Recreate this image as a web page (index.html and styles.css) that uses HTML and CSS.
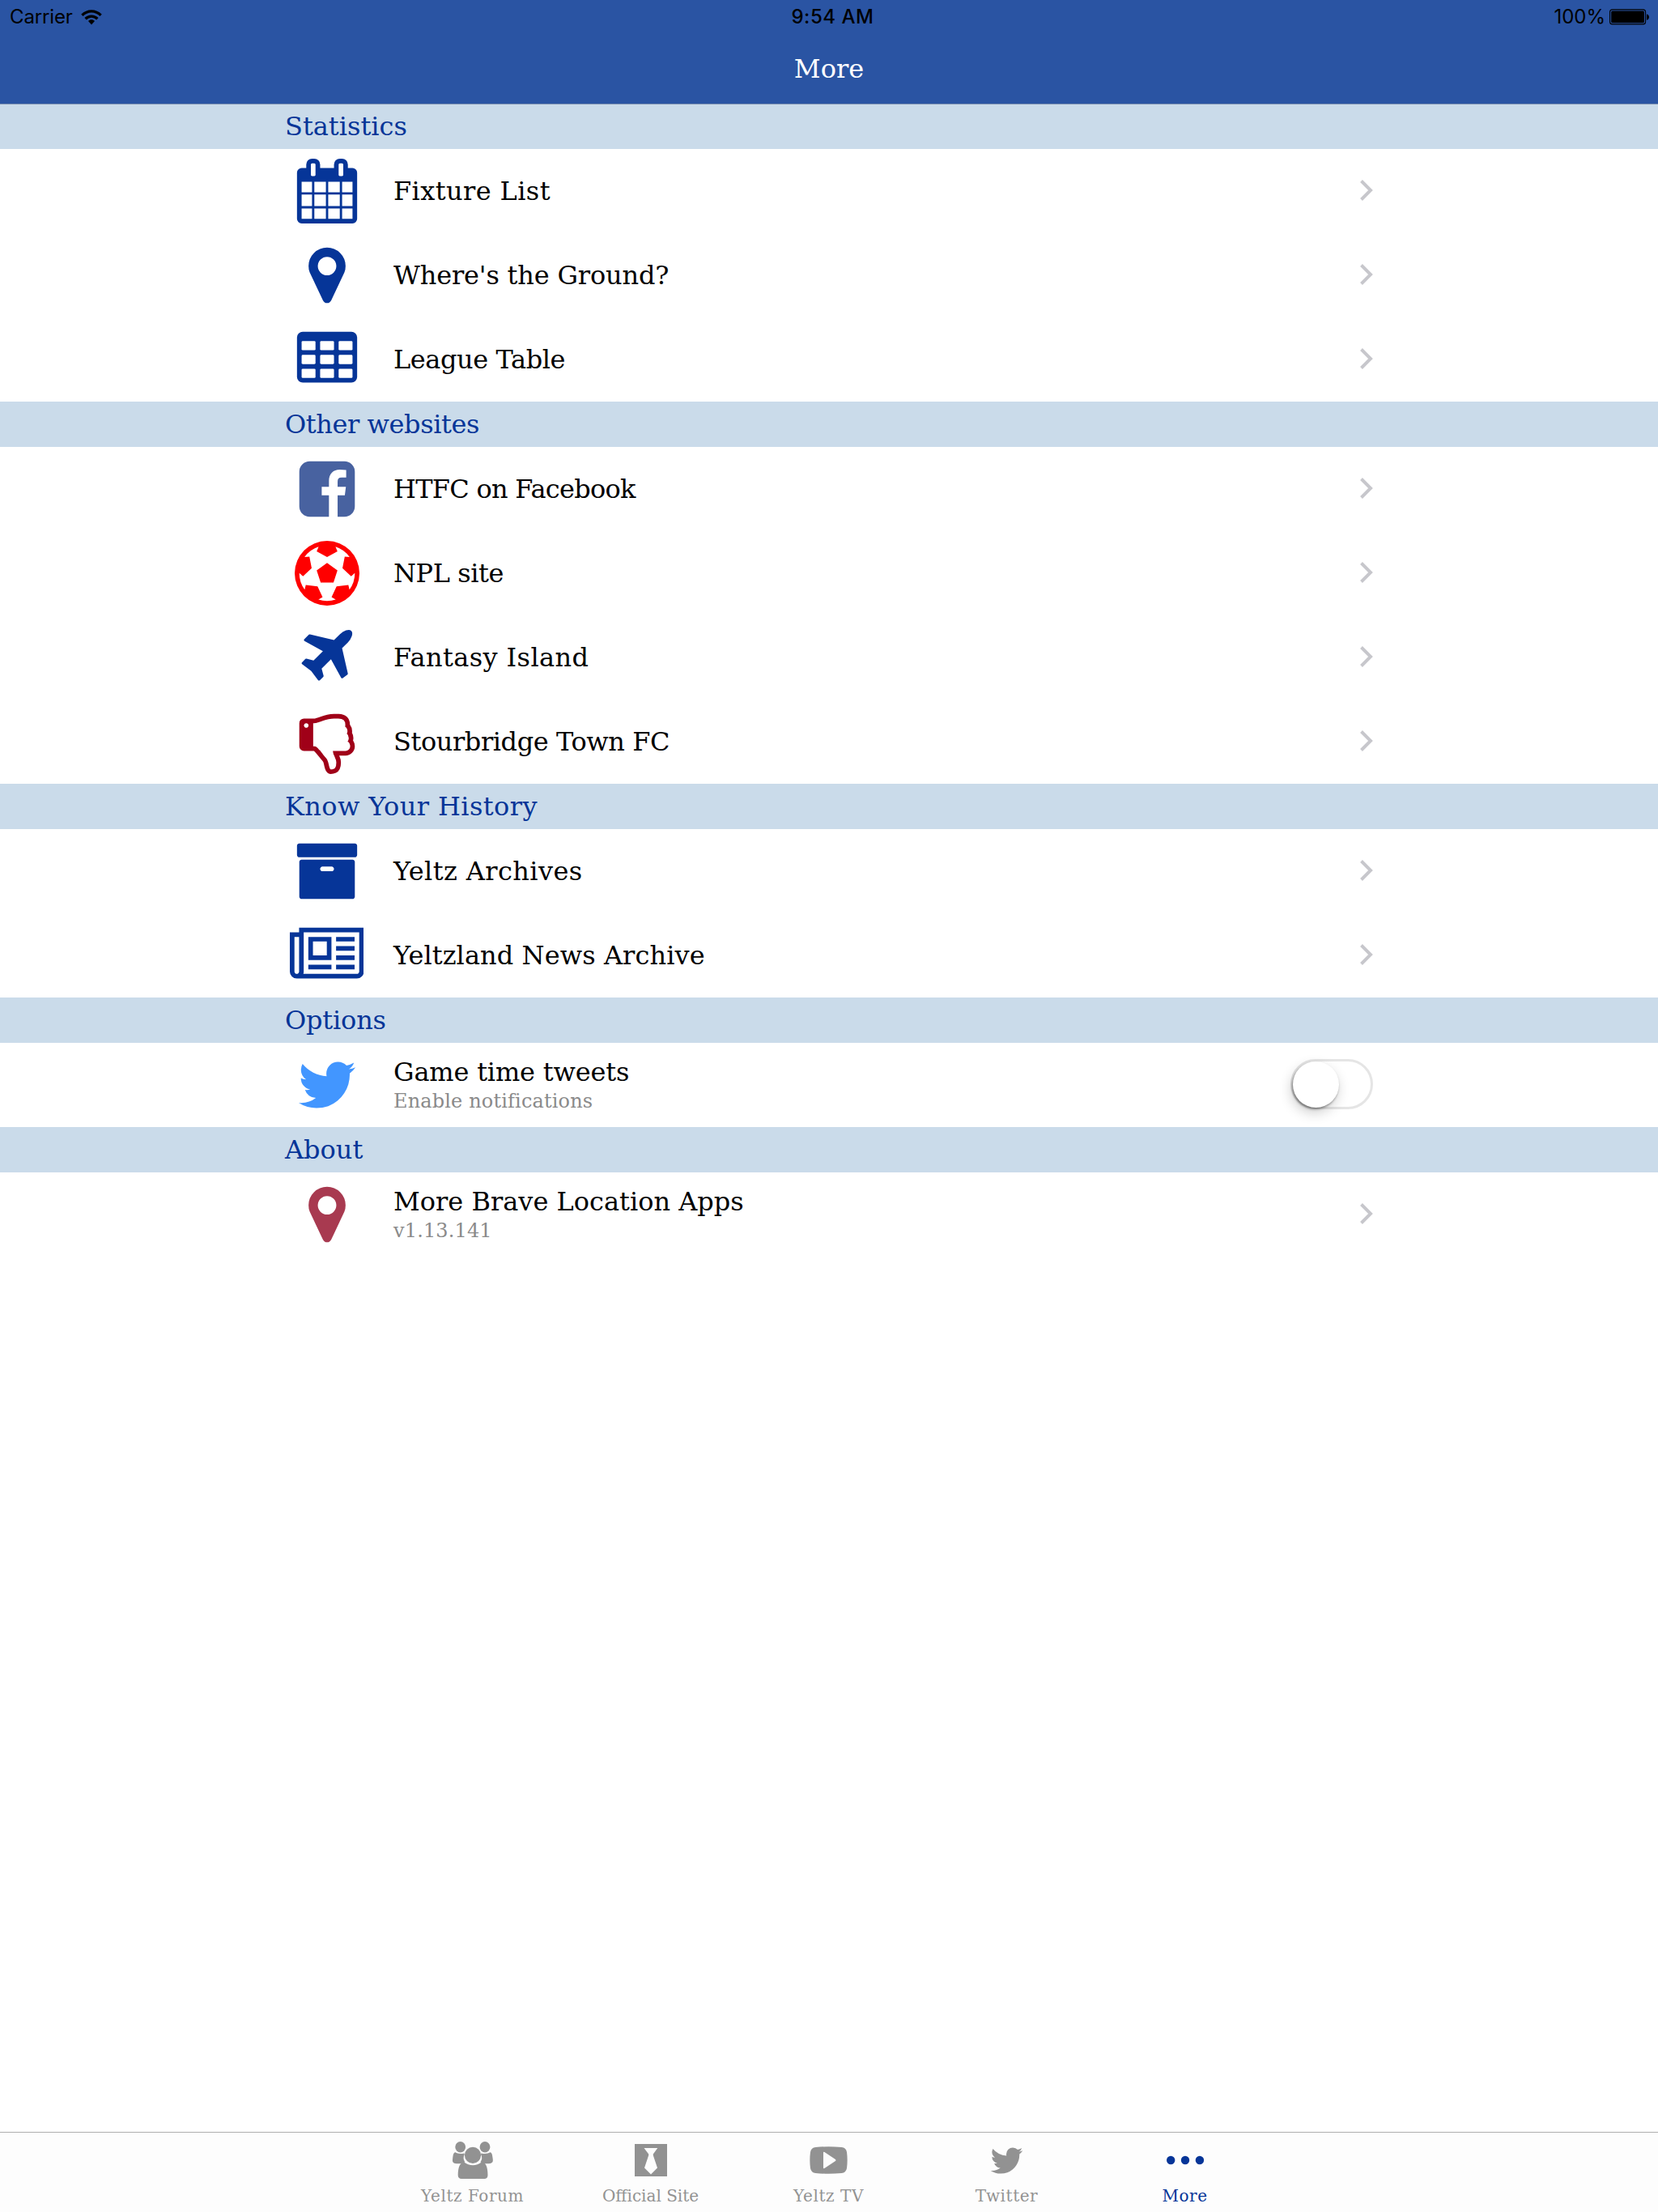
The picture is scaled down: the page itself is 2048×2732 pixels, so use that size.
FILE: index.html
```html
<!DOCTYPE html>
<html lang="en">
<head>
<meta charset="utf-8">
<title>More</title>
<link rel="stylesheet" href="styles.css">
</head>
<body>
<svg class="sprite" aria-hidden="true">
  <symbol id="pin" viewBox="0 0 1792 1792"><path d="M1152 640q0-106-75-181t-181-75-181 75-75 181 75 181 181 75 181-75 75-181zm256 0q0 109-33 179l-364 774q-16 33-47.500 52t-67.500 19-67.500-19-46.500-52l-365-774q-33-70-33-179 0-212 150-362t362-150 362 150 150 362z"/></symbol>
  <symbol id="bird" viewBox="0 0 1792 1792"><path d="M1684 408q-67 98-162 167 1 14 1 42 0 130-38 259.500t-115.500 248.500-184.500 210.500-258 146-323 54.500q-271 0-496-145 35 4 78 4 225 0 401-138-105-2-188-64.500t-114-159.500q33 5 61 5 43 0 85-11-112-23-185.500-111.500t-73.500-205.500v-4q68 38 146 41-66-44-105-115t-39-154q0-88 44-163 121 149 294.500 238.500t371.500 99.500q-8-38-8-74 0-134 94.500-228.500t228.500-94.500q140 0 236 102 109-21 205-78-37 115-142 178 93-10 186-50z"/></symbol>
  <symbol id="chevron" viewBox="0 0 18 28"><path d="M2.500 2.500L14 14 2.500 25.500" fill="none" stroke="currentColor" stroke-width="4"/></symbol>
</svg>

<header class="topbar">
  <div class="status">
    <div class="status-left">
      <span>Carrier</span>
      <svg class="wifi" viewBox="0 0 26 19"><g fill="none" stroke="currentColor" stroke-width="3.400"><path d="M1.400 6.900C8 .2 18 .2 24.600 6.900"/><path d="M5.600 11.300c4.300-4.200 10.500-4.200 14.800 0"/></g><path d="M9 14c2.300-2.200 5.700-2.200 8 0l-4 4.600z"/></svg>
    </div>
    <div class="clock">9:54 AM</div>
    <div class="status-right">
      <span>100%</span>
      <svg class="battery" viewBox="0 0 50 20"><rect x=".6" y=".9" width="44" height="18" rx="3" fill="none" stroke="currentColor" stroke-width="1.100"/><rect x="2.200" y="2.500" width="40.800" height="14.800" rx="1.500"/><path d="M46 6.500c4 .6 4 6.600 0 7.200z"/></svg>
    </div>
  </div>
  <h1 class="title">More</h1>
</header>

<main class="list">
  <h2 class="section">Statistics</h2>
  <div class="row navy">
    <svg class="icon" viewBox="0 0 1792 1792"><path d="M192 1664h288v-288h-288v288zm352 0h320v-288h-320v288zm-352-352h288v-320h-288v320zm352 0h320v-320h-320v320zm-352-384h288v-288h-288v288zm736 736h320v-288h-320v288zm-384-736h320v-288h-320v288zm768 736h288v-288h-288v288zm-384-352h320v-320h-320v320zm-352-864v-288q0-13-9.500-22.500t-22.500-9.500h-64q-13 0-22.500 9.500t-9.500 22.500v288q0 13 9.500 22.500t22.500 9.500h64q13 0 22.500-9.500t9.500-22.500zm736 864h288v-320h-288v320zm-384-384h320v-288h-320v288zm384 0h288v-288h-288v288zm32-480v-288q0-13-9.500-22.500t-22.500-9.500h-64q-13 0-22.500 9.500t-9.500 22.500v288q0 13 9.500 22.500t22.500 9.500h64q13 0 22.500-9.500t9.500-22.500zm384-64v1280q0 52-38 90t-90 38h-1408q-52 0-90-38t-38-90v-1280q0-52 38-90t90-38h128v-96q0-66 47-113t113-47h64q66 0 113 47t47 113v96h384v-96q0-66 47-113t113-47h64q66 0 113 47t47 113v96h128q52 0 90 38t38 90z"/></svg>
    <div class="label wide">Fixture List</div>
    <svg class="chevron"><use href="#chevron"/></svg>
  </div>
  <div class="row navy">
    <svg class="icon"><use href="#pin"/></svg>
    <div class="label trim">Where's the Ground?</div>
    <svg class="chevron"><use href="#chevron"/></svg>
  </div>
  <div class="row navy">
    <svg class="icon" viewBox="0 0 1792 1792"><rect x="64" y="128" width="1664" height="1408" rx="160"/><g fill="#fff"><rect x="192" y="384" width="384" height="256" rx="32"/><rect x="704" y="384" width="384" height="256" rx="32"/><rect x="1216" y="384" width="384" height="256" rx="32"/><rect x="192" y="768" width="384" height="256" rx="32"/><rect x="704" y="768" width="384" height="256" rx="32"/><rect x="1216" y="768" width="384" height="256" rx="32"/><rect x="192" y="1152" width="384" height="256" rx="32"/><rect x="704" y="1152" width="384" height="256" rx="32"/><rect x="1216" y="1152" width="384" height="256" rx="32"/></g></svg>
    <div class="label snug">League Table</div>
    <svg class="chevron"><use href="#chevron"/></svg>
  </div>

  <h2 class="section snug">Other websites</h2>
  <div class="row facebook">
    <svg class="icon" viewBox="0 0 1792 1792"><path d="M1376 128q119 0 203.500 84.500t84.500 203.500v960q0 119-84.500 203.500t-203.500 84.500h-188v-595h199l30-232h-229v-148q0-56 23.500-84t91.500-28l122-1v-207q-63-9-178-9-136 0-217.500 80t-81.500 226v171h-200v232h200v595h-532q-119 0-203.500-84.500t-84.500-203.500v-960q0-119 84.500-203.500t203.500-84.500h960z"/></svg>
    <div class="label tight">HTFC on Facebook</div>
    <svg class="chevron"><use href="#chevron"/></svg>
  </div>
  <div class="row red">
    <svg class="icon" viewBox="0 0 1792 1792"><path d="M609 816l287-208 287 208-109 336h-355zm287-816q182 0 348 71t286 191 191 286 71 348-71 348-191 286-286 191-348 71-348-71-286-191-191-286-71-348 71-348 191-286 286-191 348-71zm619 1350q149-203 149-454v-3l-102 89-240-224 63-323 134 12q-150-206-389-282l53 124-287 159-287-159 53-124q-239 76-389 282l135-12 62 323-240 224-102-89v3q0 251 149 454l30-132 326 40 139 298-116 69q117 39 240 39t240-39l-116-69 139-298 326-40z"/></svg>
    <div class="label snug">NPL site</div>
    <svg class="chevron"><use href="#chevron"/></svg>
  </div>
  <div class="row navy">
    <svg class="icon" viewBox="0 0 1792 1792"><path d="M1568 160q44 52 12 148t-108 172l-161 161 160 696q5 19-12 33l-128 96q-7 6-19 6-4 0-7-1-15-3-21-16l-279-508-259 259 53 194q5 17-8 31l-96 96q-9 9-23 9h-2q-15-2-24-13l-189-252-252-189q-11-7-13-23-1-13 9-25l96-97q9-9 23-9 6 0 8 1l194 53 259-259-508-279q-14-8-17-24-2-16 9-27l128-128q14-13 30-8l665 159 160-160q76-76 172-108t148 12z"/></svg>
    <div class="label wide">Fantasy Island</div>
    <svg class="chevron"><use href="#chevron"/></svg>
  </div>
  <div class="row crimson">
    <svg class="icon" viewBox="0 0 1792 1792"><path transform="translate(128 256)" d="M256 192q0 26-19 45t-45 19t-45-19t-19-45t19-45t45-19t45 19t19 45zM1408 768q0 51-39 89.500t-89 38.500h-352q0 58 48 159.500t48 160.500q0 98-32 145t-128 47q-26-26-38-85t-30.500-125.500t-59.500-109.500q-22-23-77-91q-4-5-23-30t-31.500-41t-34.500-42.500t-40-44t-38.500-35.500t-40-27t-35.500-9h-32v-640h32q13 0 31.500-3t33-6.500t38-11t35-11.500t35.500-12.500t29-10.500q211-73 342-73h121q192 0 192 167q0 26-5 56q30 16 47.500 52.500t17.500 73.500t-18 69q53 50 53 119q0 25-10 55.500t-25 47.500q32 1 53.500 47t21.500 81zM1536 769q0-89-49-163q9-33 9-69q0-77-38-144q3-21 3-43q0-101-60-178q1-139-85-219.500t-227-80.500h-129q-96 0-189.500 22.500t-216.500 65.500q-116 40-138 40h-288q-53 0-90.500 37.500t-37.500 90.500v640q0 53 37.500 90.500t90.500 37.500h274q36 24 137 155q58 75 107 128q24 25 35.500 85.500t30.500 126.500t62 108q39 37 90 37q84 0 151-32.500t102-101.500t35-186q0-93-48-192h176q104 0 180-76t76-179z"/></svg>
    <div class="label snug">Stourbridge Town FC</div>
    <svg class="chevron"><use href="#chevron"/></svg>
  </div>

  <h2 class="section wide">Know Your History</h2>
  <div class="row navy">
    <svg class="icon" viewBox="0 0 1792 1792"><path d="M1088 832q0-26-19-45t-45-19h-256q-26 0-45 19t-19 45 19 45 45 19h256q26 0 45-19t19-45zm576-192v960q0 26-19 45t-45 19h-1408q-26 0-45-19t-19-45v-960q0-26 19-45t45-19h1408q26 0 45 19t19 45zm64-448v256q0 26-19 45t-45 19h-1536q-26 0-45-19t-19-45v-256q0-26 19-45t45-19h1536q26 0 45 19t19 45z"/></svg>
    <div class="label wide">Yeltz Archives</div>
    <svg class="chevron"><use href="#chevron"/></svg>
  </div>
  <div class="row navy">
    <svg class="icon broad" viewBox="0 0 2048 1792"><path d="M1024 512h-384v384h384v-384zm128 640v128h-640v-128h640zm0-768v640h-640v-640h640zm640 768v128h-512v-128h512zm0-256v128h-512v-128h512zm0-256v128h-512v-128h512zm0-256v128h-512v-128h512zm-1536 960v-960h-128v960q0 26 19 45t45 19 45-19 19-45zm1664 0v-1088h-1536v1088q0 33-11 64h1483q26 0 45-19t19-45zm128-1216v1216q0 80-56 136t-136 56h-1664q-80 0-136-56t-56-136v-1088h256v-128h1792z"/></svg>
    <div class="label roomy">Yeltzland News Archive</div>
    <svg class="chevron"><use href="#chevron"/></svg>
  </div>

  <h2 class="section trim">Options</h2>
  <div class="row twitter">
    <svg class="icon"><use href="#bird"/></svg>
    <div class="label trim">Game time tweets<span class="detail">Enable notifications</span></div>
    <div class="switch"><div class="knob"></div></div>
  </div>

  <h2 class="section">About</h2>
  <div class="row rose">
    <svg class="icon"><use href="#pin"/></svg>
    <div class="label">More Brave Location Apps<span class="detail">v1.13.141</span></div>
    <svg class="chevron"><use href="#chevron"/></svg>
  </div>
</main>

<nav class="tabs">
  <div class="tab">
    <svg class="glyph" width="50" height="46" viewBox="0 0 50 46"><ellipse cx="9.700" cy="6.700" rx="6.400" ry="6.700"/><ellipse cx="40" cy="6.700" rx="6.400" ry="6.700"/><ellipse cx="25" cy="16.800" rx="10.100" ry="10.100"/><path id="side" d="M3.500 13.300C6 15 10 15.400 14.200 14.400c.5.500.7.900.5 1.500-1.800 3.600-1.300 6.600.7 9.300-3.500 2-7.500 2.600-12.400 1.800C-.3 26-.3 24.500.2 20.500.7 16.500 1 14 3.500 13.300z"/><use href="#side" transform="matrix(-1 0 0 1 49.800 0)"/><path d="M14 25.200c7 5.300 15.300 5.300 22 0 4.500.2 7.500 5 7.500 16.300 0 3-1.700 4.500-4.200 4.500H11c-2.700 0-4.300-1.600-4.300-4.500C6.700 31.500 9.500 25.500 14 25.200z"/></svg>
    <span class="spread">Yeltz Forum</span>
  </div>
  <div class="tab">
    <svg class="glyph" width="40" height="40" viewBox="0 0 40 40"><path fill-rule="evenodd" d="M0 0h40v40H0zM11.500 5l5.700 7.500v1.500L12 29.500l8 7.900 8-7.900-5.200-15.500v-1.500L28.300 5z"/></svg>
    <span>Official Site</span>
  </div>
  <div class="tab">
    <svg class="glyph" width="47" height="34" viewBox="0 0 47 34"><path fill-rule="evenodd" d="M7.500 1q16-1.600 32 0Q45 1.500 46 7q1.300 10 0 20-1 5.500-6.500 6-16 1.600-32 0Q2 32.500 1 27-.3 17 1 7 2 1.500 7.500 1zM17 7.700v18.600q0 1.600 1.400.7l13.200-8.700q1.800-1.300 0-2.600L18.400 7q-1.400-.9-1.400.7z"/></svg>
    <span class="spread">Yeltz TV</span>
  </div>
  <div class="tab">
    <svg class="glyph" width="45" height="45"><use href="#bird"/></svg>
    <span class="spread">Twitter</span>
  </div>
  <div class="tab active">
    <svg class="glyph" width="46" height="12" viewBox="0 0 46 12"><circle cx="5.200" cy="6" r="5.200"/><circle cx="23" cy="6" r="5.200"/><circle cx="40.900" cy="6" r="5.200"/></svg>
    <span class="spread">More</span>
  </div>
</nav>
</body>
</html>
```
FILE: styles.css
```css
* { box-sizing: border-box; }

body {
  margin: 0;
  height: 2732px;
  display: flex;
  flex-direction: column;
  overflow: hidden;
  background: #fff;
  color: #000;
  font: 32px "DejaVu Serif", serif;
}

svg { display: block; flex: none; fill: currentColor; }
.sprite { position: absolute; width: 0; height: 0; }

.topbar {
  height: 129px;
  flex: none;
  background: #2a54a3;
  border-bottom: 1px solid #7d91b0;
}

.status {
  height: 40px;
  display: grid;
  grid-template-columns: 1fr auto 1fr;
  align-items: center;
  padding: 0 11px 0 12px;
  font: 24px/42px Inter, sans-serif;
}
.status-left, .status-right { display: flex; align-items: center; }
.status-left { gap: 10px; letter-spacing: -.15px; }
.status-right { justify-content: flex-end; gap: 5px; }
.clock { padding-left: 8px; font-weight: 500; letter-spacing: .55px; }
.wifi { width: 26px; height: 19px; }
.battery { width: 50px; height: 20px; }
.status-right .battery { margin-right: -1px; }

.title {
  margin: 0;
  color: #fff;
  font-size: 32px;
  font-weight: 400;
  line-height: 90px;
  text-align: center;
}

.list { flex: 1; }

.section {
  margin: 0;
  height: 56px;
  padding-left: 352px;
  background: #cadbea;
  color: #063598;
  font-size: 32px;
  font-weight: 400;
  line-height: 56px;
}
.section:first-child { height: 55px; line-height: 54px; }

.row {
  height: 104px;
  padding: 0 351px 0 352px;
  display: flex;
  align-items: center;
}
.icon { width: 80px; height: 80px; margin: 0 42.500px 0 11.500px; }
.icon.broad { width: 91.430px; margin: 0 36.790px 0 5.780px; }
.label {
  flex: 1;
  color: #000;
  line-height: 40px;
}
.detail {
  display: block;
  color: #8a8a8a;
  font-size: 24px;
  line-height: 33px;
  letter-spacing: .15px;
}
.row .chevron { width: 18px; height: 28px; margin-bottom: 2px; color: #c7c7cc; }

.wide { letter-spacing: .4px; }
.roomy { letter-spacing: .08px; }
.trim { letter-spacing: -.18px; }
.snug { letter-spacing: -.42px; }
.tight { letter-spacing: -.74px; }

.navy { color: #063598; }
.facebook { color: #4862a0; }
.red { color: #ff0000; }
.crimson { color: #a00018; }
.twitter { color: #4296ff; }
.rose { color: #a83a50; }

.switch {
  width: 102px;
  height: 62px;
  margin: 0 1px 2px 0;
  border: 3px solid #e5e5e5;
  border-radius: 31px;
}
.knob {
  width: 57px;
  height: 57px;
  border-radius: 50%;
  background: #fff;
  box-shadow: -1px 2px 3px rgba(0, 0, 0, .4), -2px 6px 16px rgba(0, 0, 0, .2);
}

.tabs {
  height: 99px;
  flex: none;
  display: flex;
  justify-content: center;
  border-top: 1px solid #aeaeae;
  background: #fdfdfd;
  color: #929292;
  font-size: 20px;
}
.tab {
  width: 220px;
  padding-right: 1px;
  display: grid;
  grid-template-rows: 68px 21px;
  justify-items: center;
  align-items: center;
  line-height: 21px;
}
.spread { letter-spacing: .55px; }
.active { color: #063598; }
```
